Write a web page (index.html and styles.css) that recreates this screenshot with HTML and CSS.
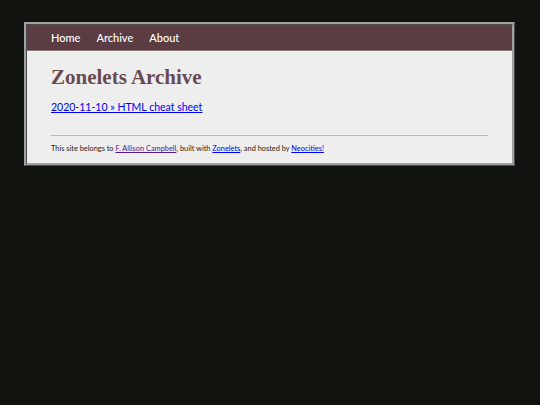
FILE: index.html
```html
<!DOCTYPE html>
<html>
<head>
<meta charset="utf-8">
<link rel="stylesheet" href="styles.css">
</head>
<body>
<div class="container">
  <div class="header">
    <nav class="nav">
      <a href="#">Home</a>
      <a href="#">Archive</a>
      <a href="#">About</a>
    </nav>
  </div>
  <div class="content">
    <h1 class="title">Zonelets Archive</h1>
    <ul class="posts">
      <li><a href="#">2020-11-10 » HTML cheat sheet</a></li>
    </ul>
  </div>
  <div class="footer">
    <hr class="rule">
    <p class="credit">This site belongs to <a href="#" class="visited">F. Allison Campbell</a>, built with <a href="#">Zonelets</a>, and hosted by <a href="#">Neocities!</a></p>
  </div>
</div>
</body>
</html>
```
FILE: styles.css
```css
html, body {
  margin: 0;
  padding: 0;
}
body {
  background: #0f120d;
  font-family: "Lato", "Open Sans", sans-serif;
  padding: 22px 24px;
}
.container {
  width: 485px;
  border: 3px ridge #a0a0a0;
  background: #eeeeee;
}
.header {
  background: #5a3c42;
  height: 25px;
  display: flex;
  align-items: center;
  border-bottom: 1px solid #8a7a7d;
}
.nav {
  display: flex;
  gap: 16px;
  padding-left: 24px;
}
.nav a {
  color: #ffffff;
  text-decoration: none;
  font-size: 11px;
  font-family: "Lato", sans-serif;
  font-weight: 500;
}
.content {
  padding: 14px 24px 0 24px;
}
.title {
  margin: 0;
  font-family: "Liberation Serif", serif;
  font-weight: bold;
  font-size: 21px;
  color: #6a4a51;
  line-height: 24px;
}
.posts {
  list-style: none;
  margin: 6px 0 0 0;
  padding: 0;
}
.posts a {
  color: #0000ee;
  font-size: 10.5px;
}
.footer {
  padding: 0 24px 10px 24px;
}
.rule {
  margin: 21px 0 0 0;
  border: 0;
  border-top: 1px solid #b8b8b8;
}
.credit {
  margin: 8px 0 0 0;
  font-size: 7.4px;
  color: #222;
}
.credit a {
  color: #0000ee;
}
.credit a.visited {
  color: #551a8b;
}
```
